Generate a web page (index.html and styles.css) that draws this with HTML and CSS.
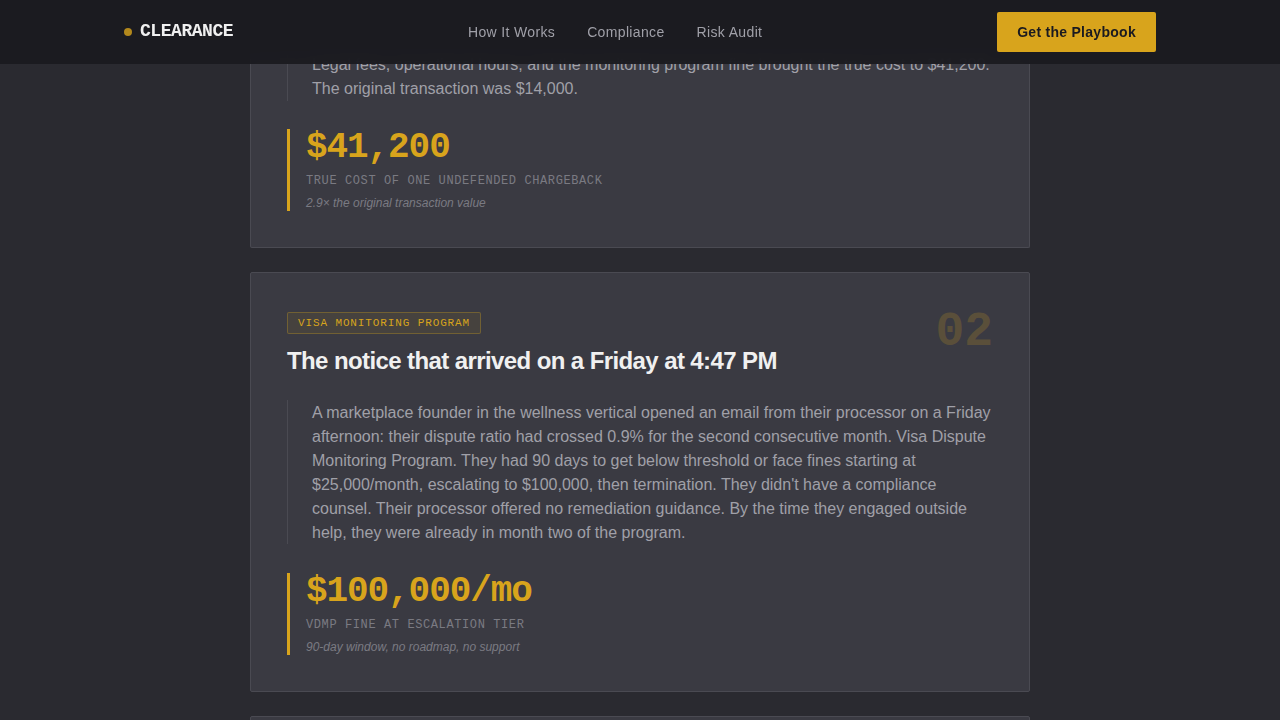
FILE: index.html
```html
<!DOCTYPE html>
<html lang="en">
<head>
  <meta charset="UTF-8" />
  <meta name="viewport" content="width=device-width, initial-scale=1" />
  <title>Clearance</title>
  <link rel="stylesheet" href="styles.css">
</head>
<body>
  <nav class="nav">
    <div class="nav-inner">
      <a href="#" class="logo"><span class="logo-dot"></span><span class="logo-text">CLEARANCE</span></a>
      <div class="nav-links">
        <a href="#">How It Works</a>
        <a href="#">Compliance</a>
        <a href="#">Risk Audit</a>
      </div>
      <a href="#" class="nav-btn">Get the Playbook</a>
    </div>
  </nav>

  <main class="cases">
    <article class="case case-first">
      <p class="story">Legal fees, operational hours, and the monitoring program fine brought the true cost to $41,200. The original transaction was $14,000.</p>
      <div class="metric">
        <div class="metric-value">$41,200</div>
        <div class="metric-label">TRUE COST OF ONE UNDEFENDED CHARGEBACK</div>
        <div class="metric-note">2.9× the original transaction value</div>
      </div>
    </article>

    <article class="case">
      <div class="case-num">02</div>
      <span class="tag">VISA MONITORING PROGRAM</span>
      <h2 class="case-title">The notice that arrived on a Friday at 4:47 PM</h2>
      <p class="story">A marketplace founder in the wellness vertical opened an email from their processor on a Friday afternoon: their dispute ratio had crossed 0.9% for the second consecutive month. Visa Dispute Monitoring Program. They had 90 days to get below threshold or face fines starting at $25,000/month, escalating to $100,000, then termination. They didn't have a compliance counsel. Their processor offered no remediation guidance. By the time they engaged outside help, they were already in month two of the program.</p>
      <div class="metric">
        <div class="metric-value">$100,000/mo</div>
        <div class="metric-label">VDMP FINE AT ESCALATION TIER</div>
        <div class="metric-note">90-day window, no roadmap, no support</div>
      </div>
    </article>

    <article class="case case-next"></article>
  </main>
</body>
</html>
```

FILE: styles.css
```css
html, body {
  height: 100%;
  overflow: hidden;
}
body {
  font-family: "Liberation Sans", Arial, sans-serif;
  background: #2a2a30;
  margin: 0;
  padding: 0;
}
a {
  text-decoration: none;
}

/* nav */
.nav {
  position: fixed;
  top: 0;
  left: 0;
  right: 0;
  z-index: 10;
  background: rgba(26, 26, 32, 0.95);
  backdrop-filter: blur(8px);
}
.nav-inner {
  max-width: 1032px;
  height: 64px;
  margin: 0 auto;
  display: flex;
  align-items: center;
  justify-content: space-between;
}
.logo {
  display: flex;
  align-items: center;
  gap: 8px;
  font-family: "Liberation Mono", monospace;
  font-weight: 700;
  font-size: 18px;
  line-height: 20px;
  letter-spacing: -0.025em;
  color: #f0f0f0;
}
.logo-text {
  margin-bottom: 2px;
}
.logo-dot {
  width: 8px;
  height: 8px;
  border-radius: 50%;
  background: #d8a41c;
  opacity: 0.8;
}
.nav-links {
  display: flex;
  gap: 32px;
}
.nav-links a {
  font-size: 14px;
  letter-spacing: 0.35px;
  color: #a0a0a8;
}
.nav-btn {
  background: #d8a41c;
  color: #1a1a20;
  font-size: 14px;
  font-weight: 700;
  letter-spacing: 0.02em;
  padding: 12px 20px;
  line-height: 16px;
  border-radius: 2px;
}

/* cases */
.cases {
  width: 780px;
  margin: 0 auto;
  display: flex;
  flex-direction: column;
  gap: 24px;
}
.case {
  position: relative;
  box-sizing: border-box;
  background: #3a3a42;
  border: 1px solid #4a4a52;
  border-radius: 2px;
  padding: 39px 36px 36px;
}
.case-first {
  padding-top: 0;
  margin-top: 53px;
  border-top: 0;
}
.case-next {
  height: 200px;
}
.case-num {
  position: absolute;
  top: 31px;
  right: 36px;
  font-family: "Liberation Mono", monospace;
  font-weight: 700;
  font-size: 48px;
  line-height: 56px;
  color: #d8a41c;
  opacity: 0.2;
}
.tag {
  display: block;
  width: fit-content;
  font-family: "Liberation Mono", monospace;
  font-size: 11px;
  line-height: 20px;
  letter-spacing: 0.08em;
  color: #d8a41c;
  background: rgba(216, 164, 28, 0.08);
  border: 1px solid rgba(216, 164, 28, 0.3);
  border-radius: 2px;
  padding: 0 10px;
}
.case-title {
  margin: 12px 0 24px;
  font-size: 24px;
  line-height: 30px;
  font-weight: 700;
  letter-spacing: -0.025em;
  color: #f0f0f0;
}
.story {
  margin: 0 0 28px;
  padding-left: 24px;
  border-left: 1px solid #4a4a52;
  font-size: 16px;
  line-height: 24px;
  color: #a0a0a8;
}
.case-title + .story {
  box-sizing: border-box;
  height: 144px;
  padding-top: 1px;
  margin-bottom: 29px;
}
.metric {
  border-left: 3px solid #d8a41c;
  padding-left: 16px;
}
.metric-value {
  padding-top: 1px;
  font-family: "Liberation Mono", monospace;
  font-weight: 700;
  font-size: 36px;
  line-height: 36px;
  letter-spacing: -0.03em;
  color: #d8a41c;
}
.metric-label {
  margin-top: 6px;
  font-family: "Liberation Mono", monospace;
  font-size: 12px;
  line-height: 18px;
  letter-spacing: 0.05em;
  color: #7a7a82;
}
.metric-note {
  margin-top: 5px;
  font-size: 12px;
  line-height: 16px;
  font-style: italic;
  color: #7a7a82;
}
```
